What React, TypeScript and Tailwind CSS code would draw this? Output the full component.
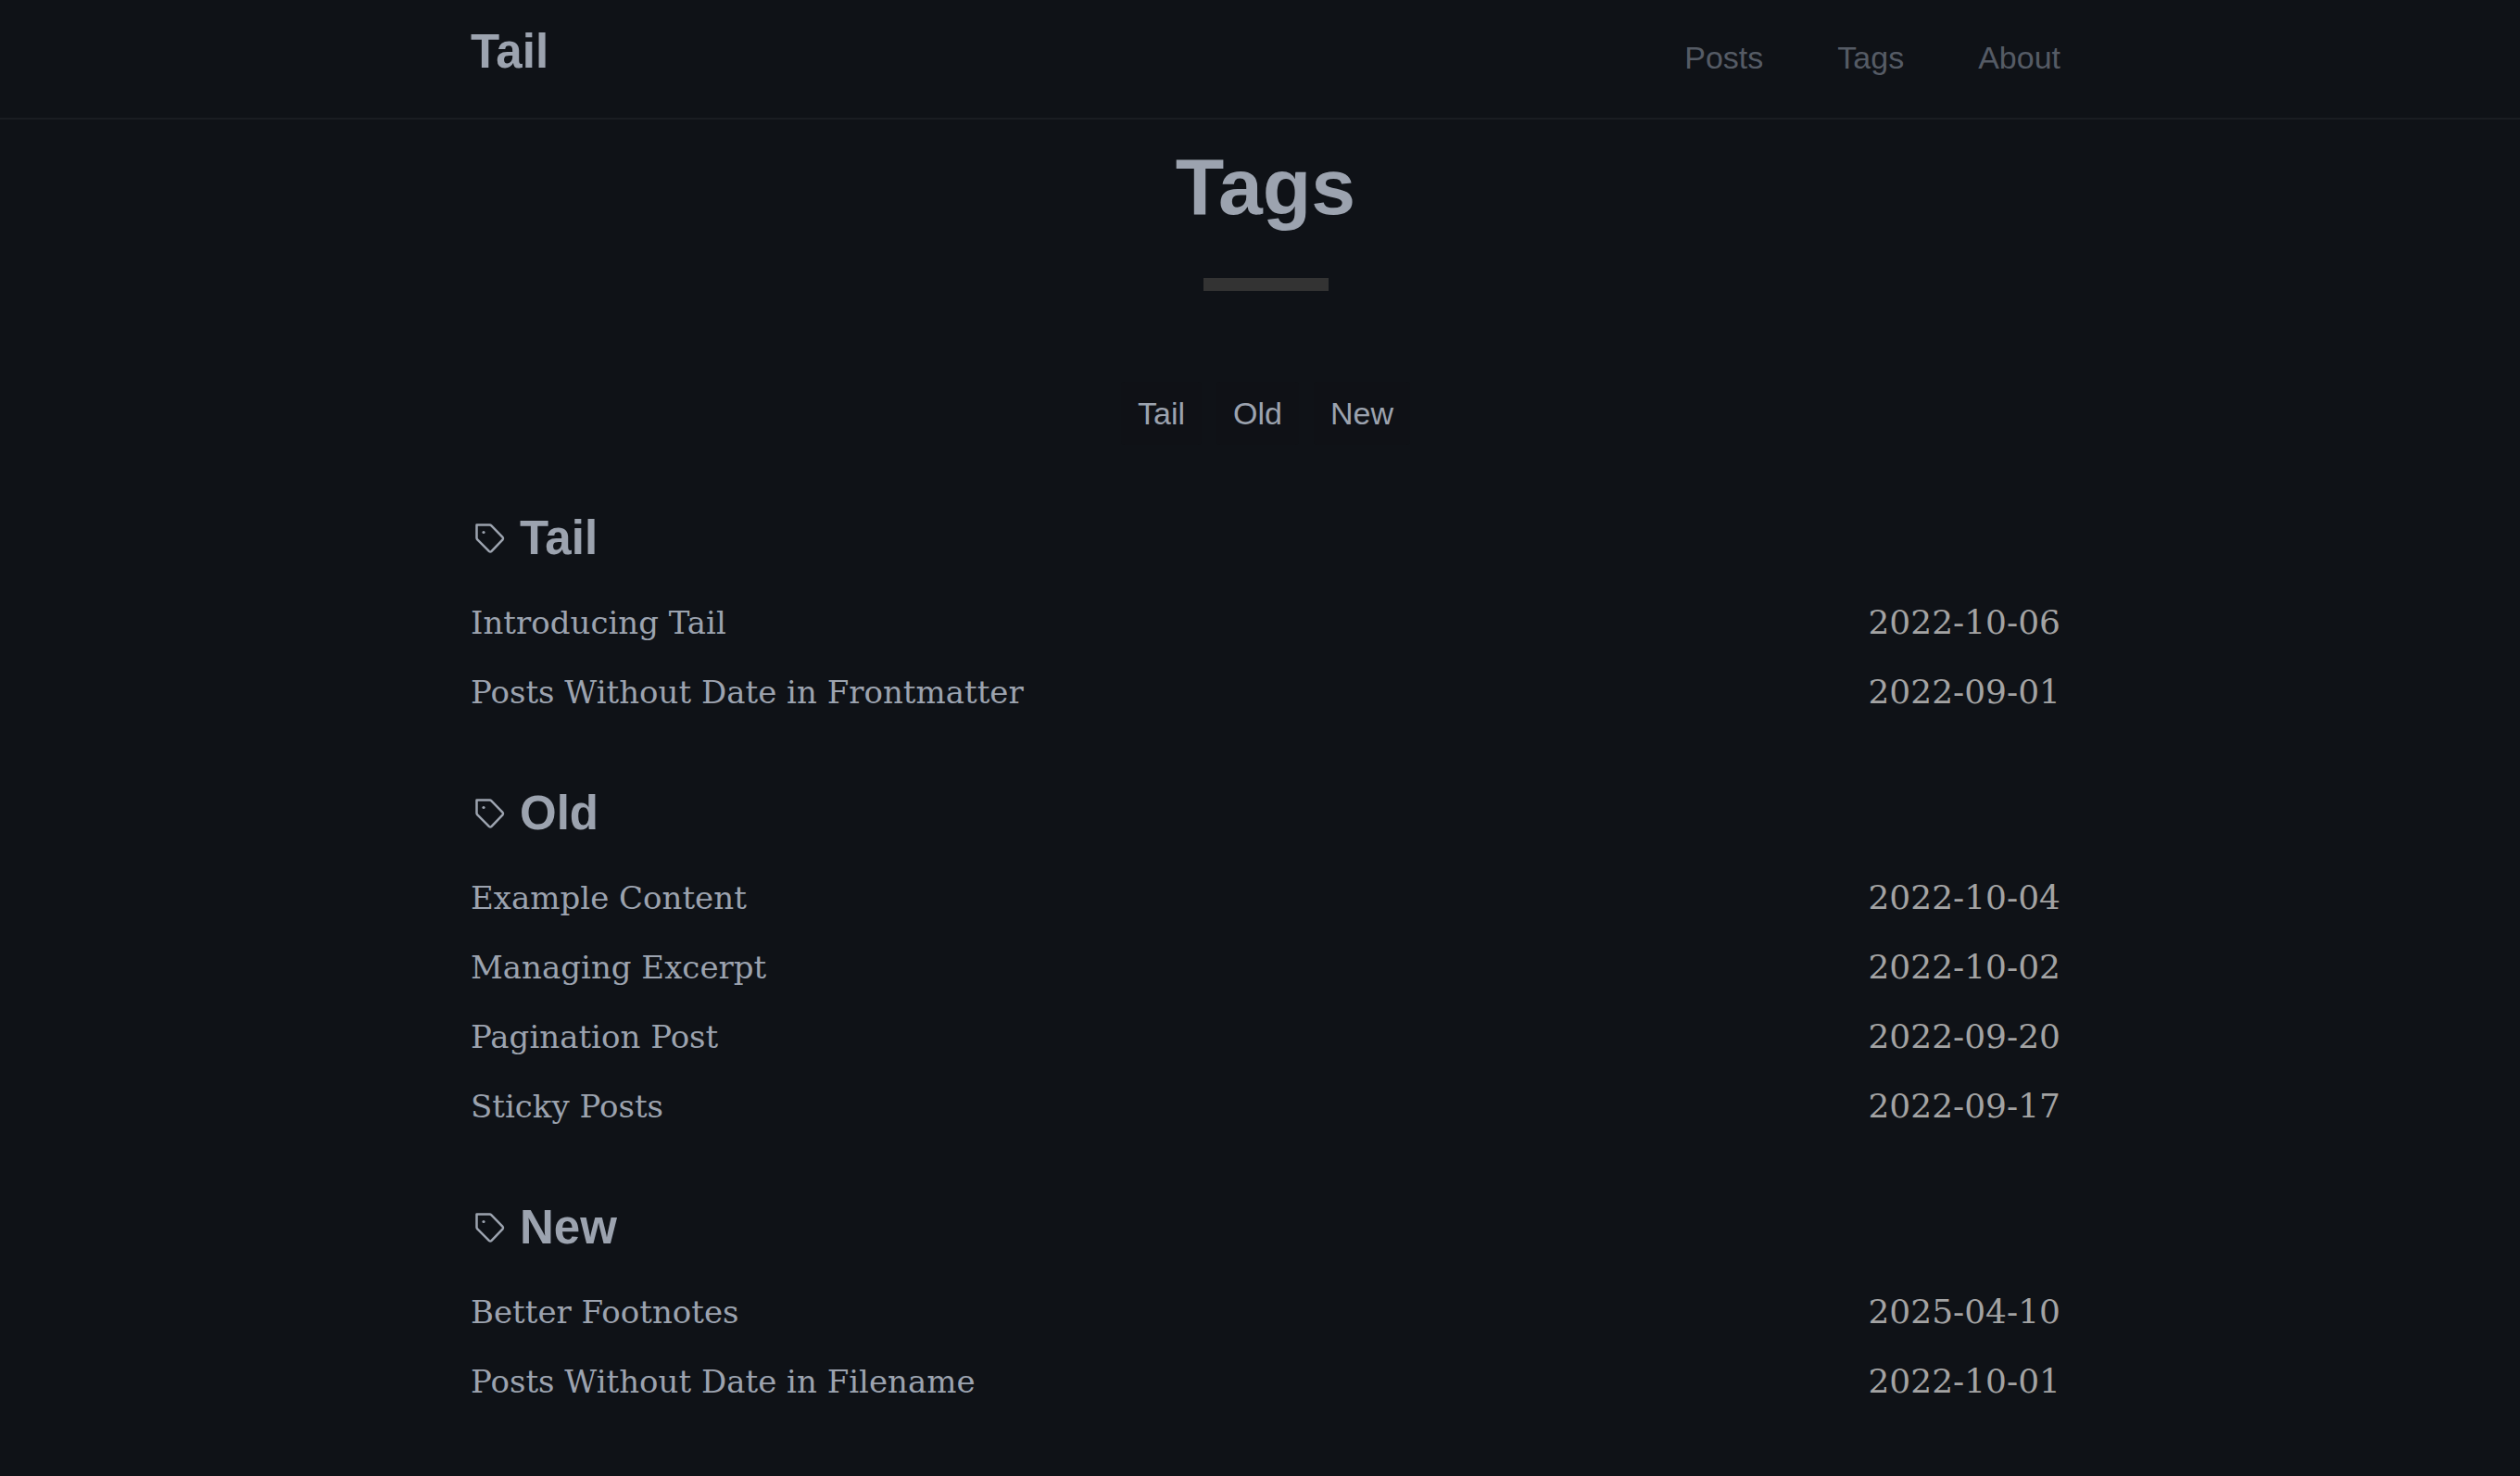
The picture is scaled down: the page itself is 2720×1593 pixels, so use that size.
const nav = ["Posts", "Tags", "About"];

const groups = [
  {
    tag: "Tail",
    posts: [
      { title: "Introducing Tail", date: "2022-10-06" },
      { title: "Posts Without Date in Frontmatter", date: "2022-09-01" },
    ],
  },
  {
    tag: "Old",
    posts: [
      { title: "Example Content", date: "2022-10-04" },
      { title: "Managing Excerpt", date: "2022-10-02" },
      { title: "Pagination Post", date: "2022-09-20" },
      { title: "Sticky Posts", date: "2022-09-17" },
    ],
  },
  {
    tag: "New",
    posts: [
      { title: "Better Footnotes", date: "2025-04-10" },
      { title: "Posts Without Date in Filename", date: "2022-10-01" },
    ],
  },
];

function TagIcon() {
  return (
    <svg
      viewBox="0 0 42 42"
      className="size-[42px] shrink-0"
      fill="none"
      stroke="currentColor"
      strokeWidth="2.5"
      strokeLinecap="round"
      strokeLinejoin="round"
      aria-hidden="true"
    >
      <circle cx="14" cy="14.5" r="1.6" fill="currentColor" stroke="none" />
      <path d="M6.5 6.5H20.5Q21.6 6.5 22.4 7.3L34.6 19.9Q35.6 21.2 34.6 22.4L22.6 34.9Q21.2 36.2 19.8 34.9L7.3 22.4Q6.5 21.6 6.5 20.5Z" />
    </svg>
  );
}

export default function App() {
  return (
    <div className="min-h-screen bg-[#0f1217] font-['Liberation_Sans',Arial,sans-serif] text-[#9ca3af]">
      <header className="border-b-2 border-[#1a1d22] pl-3">
        <div className="mx-auto flex max-w-[1716px] items-center justify-between pt-8 pb-[35px]">
          <a href="#" className="pb-3 text-[51px] leading-[48px] font-bold">
            Tail
          </a>
          <nav className="flex gap-20 text-[34px] leading-[52px] text-[#555b65]">
            {nav.map((item) => (
              <a key={item} href="#">
                {item}
              </a>
            ))}
          </nav>
        </div>
      </header>

      <main className="pb-16 pl-3">
        <div className="mx-auto max-w-[1716px]">
          <h1 className="pt-[22px] text-center text-[86px] leading-[100px] font-bold">Tags</h1>
          <div className="mx-auto mt-[49px] h-3.5 w-[135px] bg-[#333333]" />

          <nav className="mt-[98px] flex justify-center gap-4 text-[34px] leading-[52px]">
            {groups.map((group) => (
              <a key={group.tag} href={`#${group.tag}`} className="rounded bg-[#0f1116] px-[18px] py-2">
                {group.tag}
              </a>
            ))}
          </nav>

          <div className="mt-[61px] flex flex-col gap-[54px]">
            {groups.map((group) => (
              <section key={group.tag} id={group.tag}>
                <h2 className="flex items-center gap-[11px] text-[51px] leading-[80px] font-bold">
                  <TagIcon />
                  {group.tag}
                </h2>
                <ul className="mt-[13px] font-['DejaVu_Serif',serif] text-[34px] leading-[75px]">
                  {group.posts.map((post) => (
                    <li key={post.title} className="flex h-[75px] items-baseline justify-between">
                      <a href="#">{post.title}</a>
                      <time dateTime={post.date} className="text-[36px] text-[#a3a3a3]">
                        {post.date}
                      </time>
                    </li>
                  ))}
                </ul>
              </section>
            ))}
          </div>
        </div>
      </main>
    </div>
  );
}
